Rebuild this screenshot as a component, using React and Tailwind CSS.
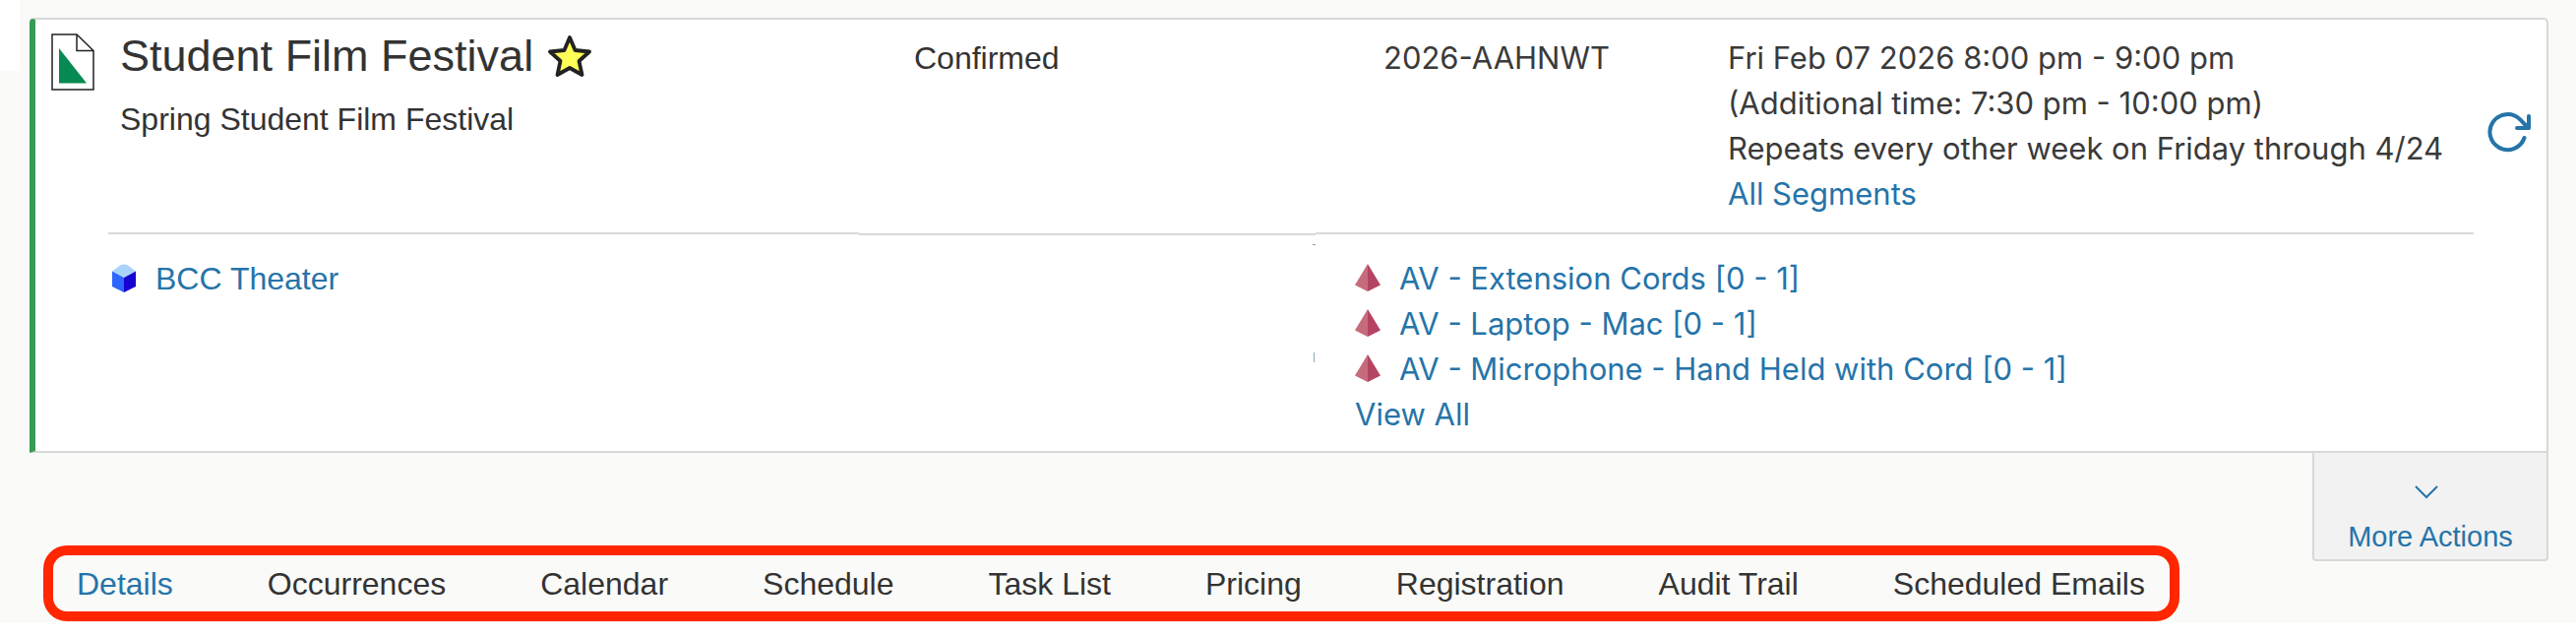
import { useState } from 'react';

const tabs = [
  'Details',
  'Occurrences',
  'Calendar',
  'Schedule',
  'Task List',
  'Pricing',
  'Registration',
  'Audit Trail',
  'Scheduled Emails',
];

const resources = [
  'AV - Extension Cords [0 - 1]',
  'AV - Laptop - Mac [0 - 1]',
  'AV - Microphone - Hand Held with Cord [0 - 1]',
];

const EventIcon = () => (
  <svg viewBox="0 0 44 58" className="h-[58px] w-[44px] shrink-0" aria-hidden="true">
    <path d="M1 1H26L43 17.500V57H1Z" fill="#fff" stroke="#222" strokeWidth="1.500" />
    <path d="M26 1V17.500H43" fill="none" stroke="#222" strokeWidth="1.500" />
    <path d="M8 15V50.500H36Z" fill="#068a51" />
  </svg>
);

const StarIcon = () => (
  <svg viewBox="0 0 44 42" className="h-[42px] w-[44px]" aria-hidden="true">
    <path
      d="M22 2L27.500 15L42 16.500L31.500 26L34.500 40L22 33L9.500 40L12.500 26L2 16.500L16.500 15Z"
      fill="#ffff57"
      stroke="#222"
      strokeWidth="3.800"
      strokeLinejoin="round"
    />
  </svg>
);

const CubeIcon = () => (
  <svg viewBox="0 0 26 30" className="h-[30px] w-[26px] shrink-0" aria-hidden="true">
    <path d="M1 7.500L9 1.500Q13 -0.500 17 1.500L25 7.500L13 14Z" fill="#a9d3f8" />
    <path d="M1 7.500L13 14V29L1 23Z" fill="#2e66ff" />
    <path d="M25 7.500L13 14V29L25 23Z" fill="#1503d2" />
  </svg>
);

const PyramidIcon = () => (
  <svg viewBox="0 0 26 30" className="h-[30px] w-[26px] shrink-0" aria-hidden="true">
    <path d="M13 0L0 21.500L13 28Z" fill="#c56c7c" />
    <path d="M13 0L26 21.500L13 28Z" fill="#b54462" />
  </svg>
);

const RefreshIcon = () => (
  <svg
    viewBox="0 0 44 42"
    className="h-[42px] w-[44px]"
    fill="none"
    stroke="#2574a9"
    strokeWidth="4"
    strokeLinecap="round"
    strokeLinejoin="round"
    aria-hidden="true"
  >
    <path d="M37.500 26A18 18 0 1 1 33 7.200L41.500 16" />
    <path d="M42 4V16H30" />
  </svg>
);

const App = () => {
  const [activeTab, setActiveTab] = useState('Details');

  return (
    <div className="bg-white">
      <main className="relative bg-[#fafaf8] pt-[18px] pb-px font-['Liberation_Sans',Arial,sans-serif] text-[32px] leading-[46px] text-[#333]">
        <div className="absolute top-0 left-0 h-[72px] w-5 bg-white"></div>

        <section className="mr-7 ml-[30px] rounded-t-[5px] border-2 border-l-6 border-[#d8d8d8] border-l-[#369b54] bg-white">
          <div className="flex pl-4">
            <div className="pt-[14px]">
              <EventIcon />
            </div>
            <div className="grid grow grid-cols-[807fr_477fr_1122fr] pl-[26px]">
              <div className="pt-[11px]">
                <div className="flex items-center gap-[15px]">
                  <h1 className="text-[45px] leading-[52px]">Student Film Festival</h1>
                  <button aria-label="Remove from starred events">
                    <StarIcon />
                  </button>
                </div>
                <p className="pt-[15px]">Spring Student Film Festival</p>
              </div>
              <p className="pt-4">Confirmed</p>
              <div className="grid grid-cols-[350fr_772fr] pt-4 pb-4 font-[Inter,sans-serif] text-[31px] text-[#3a3a3a]">
                <p>2026-AAHNWT</p>
                <div>
                  <p>Fri Feb 07 2026 8:00 pm - 9:00 pm</p>
                  <p>(Additional time: 7:30 pm - 10:00 pm)</p>
                  <p>Repeats every other week on Friday through 4/24</p>
                  <a href="#segments" className="block text-[#2574a9]">
                    All Segments
                  </a>
                </div>
              </div>
            </div>
            <div className="flex w-[60px] items-center pt-[14px]">
              <button aria-label="Refresh">
                <RefreshIcon />
              </button>
            </div>
          </div>

          {/* divider, the middle part sits one pixel lower */}
          <div className="mx-[74px] grid h-[3px] grid-cols-[763fr_464fr_1177fr]">
            <div className="h-[2px] bg-[#d8d8d8]"></div>
            <div className="h-[2px] self-end bg-[#d8d8d8]"></div>
            <div className="h-[2px] bg-[#d8d8d8]"></div>
          </div>

          <div className="grid grid-cols-[1267fr_1211fr] pt-[21px] pb-[14px] pl-[74px]">
            <a href="#theater" className="flex items-center gap-[19px] self-start pl-[3px] text-[#2574a9]">
              <CubeIcon />
              BCC Theater
            </a>
            <div className="relative font-[Inter,sans-serif] text-[31px] text-[#2574a9]">
              <span className="absolute -top-3 -left-[43px] h-px w-[3px] bg-[#7fabc9]"></span>
              <span className="absolute top-[98px] -left-[42px] h-[10px] w-px bg-[#7fabc9]"></span>
              {resources.map(name => (
                <a key={name} href="#resource" className="flex items-center gap-[19px]">
                  <PyramidIcon />
                  {name}
                </a>
              ))}
              <a href="#all-resources" className="block">
                View All
              </a>
            </div>
          </div>
        </section>

        <div className="flex items-start justify-between pr-7 pl-11">
          <nav className="mt-[94px] flex gap-24 rounded-[24px] border-10 border-[#ff2600] pt-[6px] pr-[25px] pb-[5px] pl-[24px]">
            {tabs.map(tab => (
              <button
                key={tab}
                onClick={() => setActiveTab(tab)}
                className={`whitespace-nowrap ${activeTab === tab ? 'text-[#2574a9]' : 'text-[#333]'}`}
              >
                {tab}
              </button>
            ))}
          </nav>

          <button className="flex w-[240px] flex-col items-center rounded-b-[4px] border-2 border-t-0 border-[#d8d8d8] bg-[#f2f2f2] pt-[33px] pb-[3px] text-[29px] leading-[40px] text-[#2574a9]">
            <svg viewBox="0 0 24 14" className="mr-2 mb-[18px] h-[14px] w-[24px]" fill="none" stroke="currentColor" strokeWidth="2" aria-hidden="true">
              <path d="M1 1L12 12L23 1" />
            </svg>
            More Actions
          </button>
        </div>
      </main>
    </div>
  );
};

export default App;
